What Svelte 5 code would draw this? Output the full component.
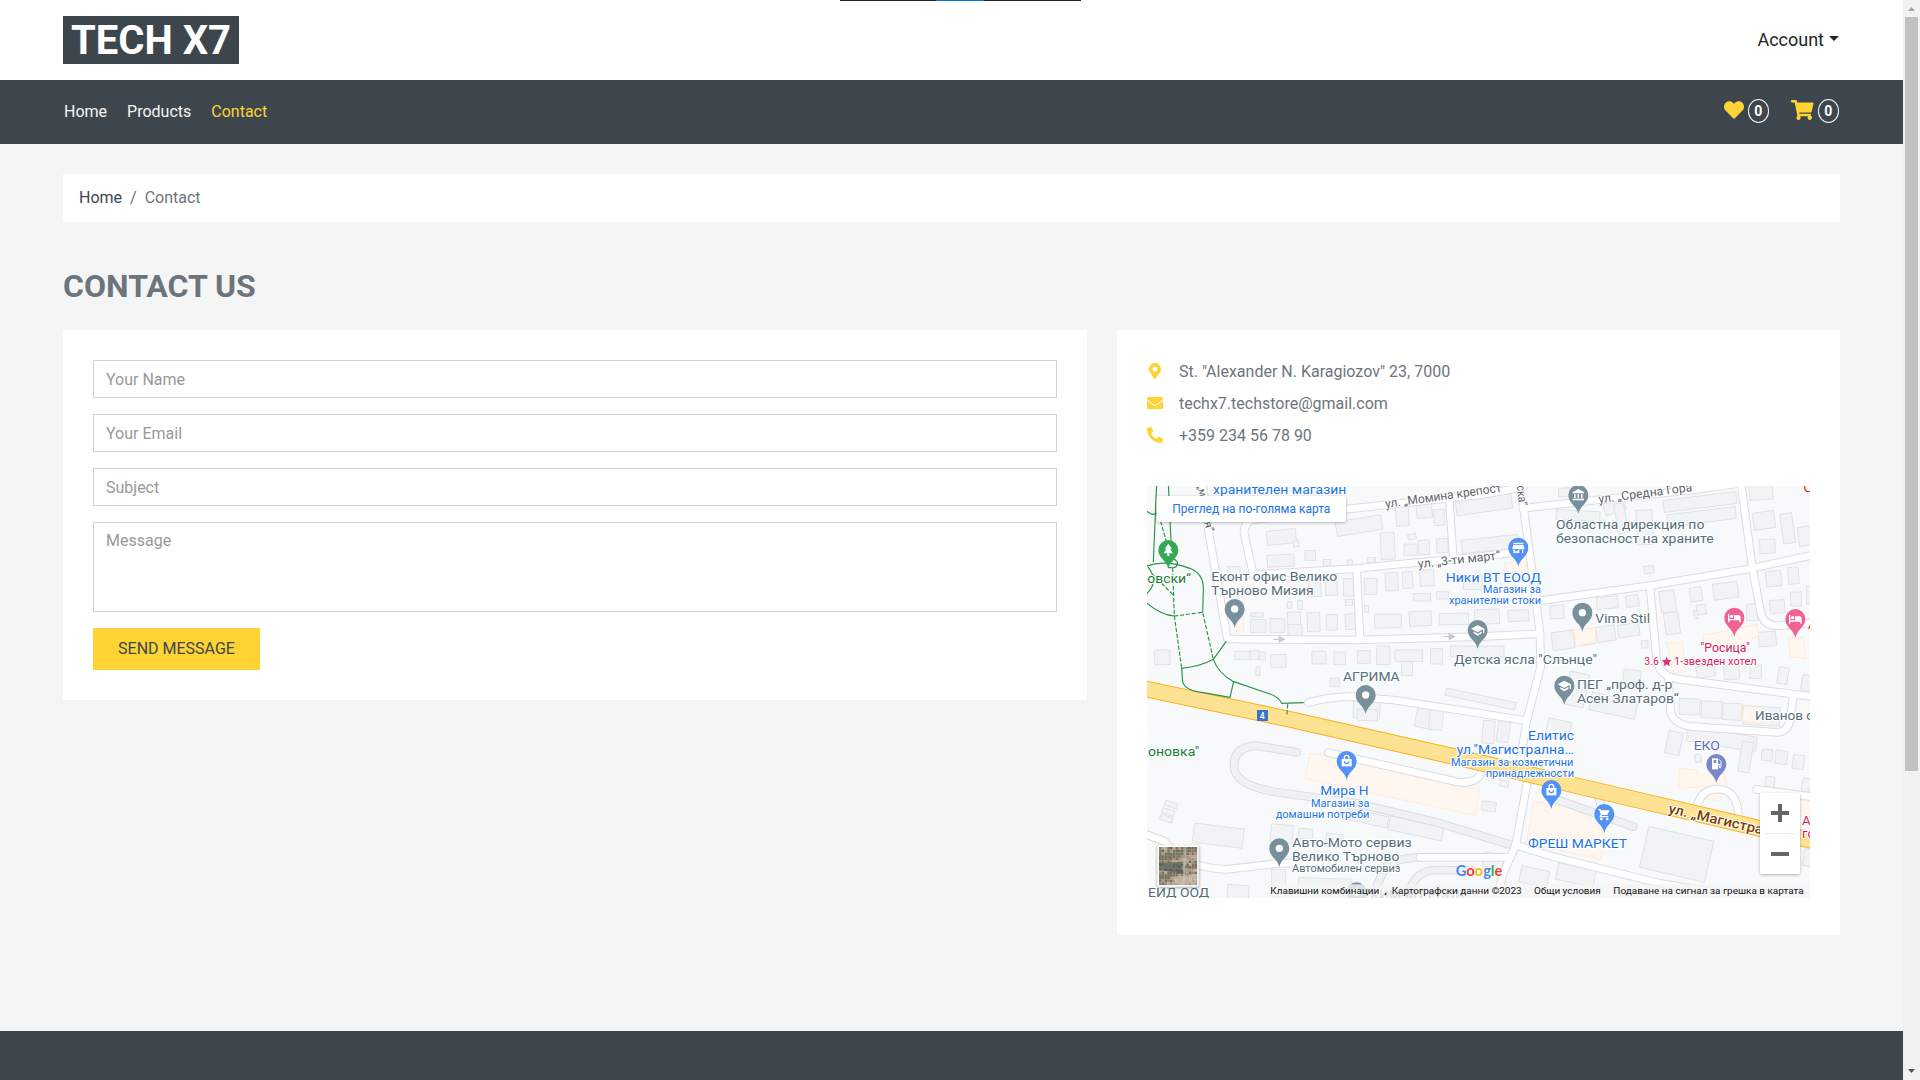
<script>
  const heart = 'M462.3 62.6C407.5 15.9 326 24.3 275.7 76.2L256 96.5l-19.7-20.3C186.1 24.3 104.5 15.9 49.7 62.6c-62.8 53.6-66.1 149.8-9.9 207.9l193.5 199.8c12.5 12.9 32.8 12.9 45.3 0l193.5-199.8c56.3-58.1 53-154.3-9.8-207.9z';
  const cart = 'M528.12 301.319l47.273-208C578.806 78.301 567.391 64 551.99 64H159.208l-9.166-44.81C147.758 8.021 137.93 0 126.529 0H24C10.745 0 0 10.745 0 24v16c0 13.255 10.745 24 24 24h69.883l70.248 343.435C147.325 417.1 136 435.222 136 456c0 30.928 25.072 56 56 56s56-25.072 56-56c0-15.674-6.447-29.835-16.824-40h209.647C430.447 426.165 424 440.326 424 456c0 30.928 25.072 56 56 56s56-25.072 56-56c0-22.172-12.888-41.332-31.579-50.405l5.517-24.276c3.413-15.018-8.002-29.319-23.403-29.319H218.117l-6.545-32h293.145c11.206 0 20.92-7.754 23.403-18.681z';
  const contacts = [
    { text: 'St. "Alexander N. Karagiozov" 23, 7000', box: '-64 0 512 512', icon: 'M172.268 501.67C26.97 291.031 0 269.413 0 192 0 85.961 85.961 0 192 0s192 85.961 192 192c0 77.413-26.97 99.031-172.268 309.67-9.535 13.774-29.93 13.773-39.464 0zM192 272c44.183 0 80-35.817 80-80s-35.817-80-80-80-80 35.817-80 80 35.817 80 80 80z' },
    { text: 'techx7.techstore@gmail.com', box: '0 0 512 512', icon: 'M502.3 190.8c3.9-3.1 9.7-.2 9.7 4.7V400c0 26.5-21.5 48-48 48H48c-26.5 0-48-21.5-48-48V195.6c0-5 5.7-7.8 9.7-4.7 22.4 17.4 52.1 39.5 154.1 113.6 21.1 15.4 56.7 47.8 92.2 47.6 35.7.3 72-32.8 92.3-47.6 102-74.1 131.6-96.3 154-113.7zM256 320c23.2.4 56.6-29.2 73.4-41.4 132.7-96.3 142.8-104.7 173.4-128.7 5.8-4.5 9.2-11.5 9.2-18.9v-19c0-26.5-21.5-48-48-48H48c-26.5 0-48 21.5-48 48v19c0 7.4 3.4 14.3 9.2 18.9 30.6 23.9 40.7 32.4 173.4 128.7 16.8 12.2 50.2 41.8 73.4 41.4z' },
    { text: '+359 234 56 78 90', box: '0 0 512 512', icon: 'M497.39 361.8l-112-48a24 24 0 0 0-28 6.9l-49.6 60.6A370.66 370.66 0 0 1 130.6 204.11l60.6-49.6a23.94 23.94 0 0 0 6.9-28l-48-112A24.16 24.16 0 0 0 122.6.61l-104 24A24 24 0 0 0 0 48c0 256.5 207.9 464 464 464a24 24 0 0 0 23.4-18.6l24-104a24.29 24.29 0 0 0-14.01-27.6z' }
  ];

  // Map geometry: three units per pixel.
  const greyRoads = [
    'M470 817L350 797Q280 800 282 860Q285 915 400 935L650 970L900 1030L1115 1095',
    'M840 1132Q760 1135 735 1165L690 1260',
    'M800 1260Q815 1178 880 1170L1000 1172',
    'M1240 955L1480 1040',
    'M1375 950L1385 985'
  ];
  const roads = [
    'M188 10L205 150L262 477L650 480L1020 470L1200 461',
    'M1165 212L1000 233L750 255L650 266L340 284L312 160Q312 122 345 118L640 85L1020 45L1150 22',
    'M650 268L660 480',
    'M928 60L940 235',
    'M1148 85L1370 60L1660 30L1800 10',
    'M1180 365L1520 318L1820 268L2015 226',
    'M1803 10L1838 270L1863 400Q1873 440 1920 437L2015 428',
    'M1530 320L1550 540Q1558 590 1620 598L2015 650',
    'M1585 600L1592 695Q1600 735 1660 740L1910 757Q1943 757 1950 720L1960 650',
    'M505 668Q570 650 630 650L760 660L1020 700L1160 722',
    'M565 818L950 905Q1010 915 1025 875',
    'M1125 1095L1240 1130L1560 1210L2015 1290',
    'M840 1132L1112 1132',
    'M10 1060L75 1085Q130 1165 260 1168L420 1150L540 1145',
    'M1670 985Q1680 927 1735 927Q1796 932 1795 1015',
    'M1850 928L2015 950',
    'M1135 10L1150 80L1180 300L1200 460L1202 560L1160 722L1140 850L1165 890L1127 1095L1088 1185L1070 1260'
  ];
  const paths = [
    'M50 10L40 245', 'M85 10L96 245', 'M10 88L35 103L96 95',
    'M10 262Q70 235 150 265Q192 282 190 330L188 397',
    'M10 360Q60 405 103 408', 'M10 350Q62 310 25 262',
    'M125 565Q180 560 220 538L258 485',
    'M125 565L128 605Q135 632 190 638L270 652L281 605',
    'M220 538Q235 580 281 605L390 642Q415 650 425 670L490 668',
    'M85 262Q115 268 112 246Q100 230 88 240'
  ];
  const dashed = ['M62 125L85 205', 'M98 265L103 408L125 565', 'M103 408L188 397L220 538', 'M40 285L100 345', 'M443 674L441 702'];

  // [x, y, width, height, angle]
  const buildings = [
    [380,150,88,42,-6],[382,224,80,36,-3],[495,212,32,30,0],[550,238,22,18,0],[622,240,16,20,0],[682,233,24,14,0],[588,115,138,44,-9],[722,158,42,80,-3],[768,78,38,60,-4],[830,72,46,42,-4],[882,88,32,48,-3],[948,52,168,44,-8],[965,172,170,40,-6],[836,180,32,44,-4],[890,176,34,42,-4],[792,192,40,34,0],[460,182,16,18,-8],[804,162,24,16,-8],
    [262,260,38,36,0],[505,300,38,50,-2],[556,304,36,42,-2],[610,296,30,52,0],[673,295,38,48,0],[736,278,38,54,-4],[788,275,30,50,-4],[840,270,42,48,-4],[890,335,36,22,0],[820,341,52,22,0],[674,377,12,20,0],[332,399,38,12,0],[332,419,46,38,0],[390,416,44,42,0],[442,365,14,20,0],[473,362,14,26,0],[442,396,40,38,0],[444,434,42,38,0],[502,398,38,56,-2],[558,404,34,46,0],[616,402,34,46,-3],[616,358,22,18,0],[704,402,80,42,-1],[808,394,66,44,-3],[898,400,88,34,-1],[1004,388,74,44,-2],[1104,390,62,34,-2],[970,285,56,44,0],
    [44,510,46,44,-1],[284,514,50,24,0],[330,512,28,26,0],[358,516,18,24,0],[392,524,46,38,-2],[348,560,12,26,5],[516,514,42,38,-2],[582,516,34,38,0],[652,512,38,38,0],[710,498,40,56,0],[764,510,84,34,0],[784,545,34,42,0],[872,506,36,46,0],[932,498,160,32,0],[570,595,28,24,-2],[640,655,80,60,2],[652,688,60,34,1],[916,646,212,22,12],[828,685,60,60,12],[868,690,40,60,5],[1028,722,35,68,5],[1072,724,36,62,8],
    [1248,92,132,30,3],[1256,24,34,26,-4],[1392,62,64,36,-18],[1428,70,30,90,-10],[1490,90,48,104,-3],[1570,48,220,36,-7],[1582,92,206,36,-7],[1512,258,30,22,-6],[1828,15,70,44,-4],[1840,95,64,52,-8],[1859,178,46,42,-3],[1925,100,36,90,-8],[1975,140,38,58,-8],[1878,273,46,46,-6],[1944,262,32,50,-4],[1890,360,44,40,-4],[1952,336,32,42,0],[2000,318,18,54,0],
    [1230,376,42,40,-3],[1236,454,66,54,-8],[1310,448,54,46,-8],[1370,438,56,46,-8],[1434,432,64,38,-8],[1370,350,64,36,-5],[1458,346,38,34,-8],[1560,332,46,64,-7],[1574,398,44,64,-7],[1650,322,36,42,-8],[1720,308,74,48,-8],[1670,374,28,30,-8],[1662,392,12,24,-5],[1820,372,34,50,0],[1504,482,20,22,0],[1856,455,52,44,-5],[1670,555,54,36,-12],[1752,556,46,42,-4],[1830,555,34,40,0],[1914,562,30,50,8],[1985,585,28,46,10],
    [1450,570,52,46,6],[1280,578,60,100,12],[1350,650,140,54,12],[1220,720,70,56,12],[1618,656,62,48,3],[1684,664,62,50,3],[1748,670,58,50,3],[1810,680,110,56,3],[1580,755,44,68,12],[1640,755,210,44,9],[1800,785,34,92,9],[1665,823,18,24,-6],[1865,808,32,34,5],[1906,812,36,40,8],[1958,825,34,42,8],[1876,890,28,32,5],[1986,895,26,40,8],[1080,902,26,18,8],[1026,965,42,28,8],[74,966,38,16,18],[66,988,38,16,18],[60,1008,38,16,18],
    [160,1038,150,58,7],[392,1034,66,54,5],[476,1046,42,32,5],[558,1062,50,38,5],[600,995,145,34,12],[746,1024,164,42,12],[262,1215,64,60,4],[395,1168,42,82,0],[475,1195,160,50,2],[1140,1165,85,50,12],[1250,1160,115,50,12],[1510,1060,200,126,13],[1990,1110,50,50,10],[1030,1120,60,42,8]
  ];
  const shops = [
    'M290 415L312 412L310 478L290 480Z', 'M1095 250L1170 244L1150 275L1092 275Z',
    'M510 820L590 832L1018 930L1005 1007L495 895Z', 'M1180 965L1290 980L1355 1020L1400 1070L1380 1138L1160 1090Z',
    'M1300 450L1365 443L1368 486L1308 498Z', 'M1690 465L1750 455L1850 432L1858 465L1790 500L1690 490Z',
    'M1580 490L1628 488L1636 575L1598 580Z', 'M1945 470L1990 472L1998 535L1950 530Z',
    'M1620 865L1670 870L1672 885L1750 880L1760 905L1740 965L1700 955L1695 920L1615 925Z',
    'M1812 678L1870 685L1862 730L1806 724Z', 'M1975 960L2015 965L2015 1010L1975 1005Z'
  ];

  const slate = '#78909c', blue = '#5491f5', pink = '#f06292';
  const pins = [
    [85,210,'#34a853','tree'],[284,387,slate,'dot'],[1315,45,slate,'museum'],[1135,203,blue,'store'],[1327,398,slate,'dot'],
    [1783,413,pink,'bed'],[1966,417,pink,'bed'],[1013,450,slate,'school'],[1273,617,slate,'school'],[677,645,slate,'dot'],
    [620,843,blue,'bag'],[418,1105,slate,'dot'],[1234,930,blue,'bag'],[1393,1002,blue,'cart'],[1729,852,'#7986cb','fuel'],[650,1237,slate,'dot']
  ];

  // [text, left, baseline, width, size, kind]
  const labels = [
    ['хранителен магазин',219,42,400,41,'blue'],
    ['Еконт офис Велико',214,303,378,41,'slate'],['Търново Мизия',214,345,307,41,'slate'],
    ['овски“',22,310,131,41,'green'],['оновка"',24,829,154,41,'green'],['АГРИМА',609,602,170,41,'slate'],
    ['Ники ВТ ЕООД',917,306,286,41,'blue'],['Магазин за',1029,338,174,32,'blue'],['хранителни стоки',927,371,276,32,'blue'],
    ['Областна дирекция по',1248,147,445,41,'slate'],['безопасност на храните',1248,189,473,41,'slate'],
    ['Vima Stil',1366,429,164,41,'slate'],['Детска ясла "Слънце"',942,552,429,41,'slate'],
    ['ПЕГ „проф. д-р',1311,627,286,41,'slate'],['Асен Златаров“',1311,669,305,41,'slate'],
    ['"Росица"',1681,515,149,41,'pink'],['3.6',1513,555,44,32,'pink'],['1-звезден хотел',1602,555,248,32,'pink'],
    ['Иванов с',1845,720,175,41,'slate'],['Елитис',1164,780,138,41,'blue'],['ул."Магистрална…',950,822,352,41,'blue'],
    ['Магазин за козметични',933,857,367,32,'blue'],['принадлежности',1037,890,265,32,'blue'],
    ['Мира Н',541,945,145,41,'blue'],['Магазин за',513,980,175,32,'blue'],['домашни потреби',407,1013,281,32,'blue'],
    ['ЕКО',1661,810,79,41,'indigo'],['ФРЕШ МАРКЕТ',1164,1104,297,41,'blue'],
    ['Авто-Мото сервиз',457,1102,358,41,'slate'],['Велико Търново',456,1143,322,41,'slate'],['Автомобилен сервиз',456,1176,325,32,'slate'],
    ['ЕИД ООД',24,1250,184,41,'slate'],['КИМ-МТ ЕООД',690,1256,285,41,'slate'],
    ['А',1986,1035,26,41,'pink'],['го',1986,1075,39,41,'pink'],['С',1990,36,28,41,'red'],['А',2004,447,25,36,'red']
  ];
  // [text, x, baseline, width, size, angle, kind]
  const streets = [
    ['ул. „Момина крепост',737,84,352,37,-8,'street'],['ул. „3-ти март“',835,264,248,37,-6,'street'],
    ['ул. „Средна Гора',1377,70,283,37,-7.5,'street'],['ска“',1130,18,60,36,83,'street'],
    ['„м',172,20,32,32,75,'street'],['я“',193,127,32,32,75,'street'],['ул. „Магистрална',1583,998,366,41,13,'highway']
  ];
  const legal = [['Клавишни комбинации',391,327],[',',733,8],['Картографски данни ©2023',755,390],['Общи условия',1182,200],['Подаване на сигнал за грешка в картата',1420,571]];

  // Small coloured tiles of the satellite preview.
  const hues = ['#8b7c69','#77705f','#a58f78','#5d6355','#b3a08c','#806e58','#8f8b80','#6b7060','#bba890','#7c6c5c'];
  const tiles = Array.from({ length: 196 }, (_, i) => ({
    x: 57 + (i % 14) * 8.15, y: 1101 + Math.floor(i / 14) * 8.15,
    fill: hues[(i * 7 + Math.floor(i / 14) * 3 + ((i * i) % 11)) % 10]
  }));
</script>

<div class="page">
  <div class="view">
    <header class="top">
      <a class="logo" href="#top">TECH X7</a>
      <button class="account">Account<span class="caret"></span></button>
    </header>
    <nav class="bar">
      <div class="links">
        <a href="#home">Home</a>
        <a href="#products">Products</a>
        <a href="#contact" class="active">Contact</a>
      </div>
      <div class="counters">
        <a href="#liked" class="counter"><svg width="20" height="20" viewBox="0 0 512 512"><path d={heart} /></svg><span class="count">0</span></a>
        <a href="#cart" class="counter"><svg width="22.5" height="20" viewBox="0 0 576 512"><path d={cart} /></svg><span class="count">0</span></a>
      </div>
    </nav>
    <main>
      <div class="crumbs"><a href="#home">Home</a><span class="slash">/</span><span>Contact</span></div>
      <h2>CONTACT US</h2>
      <div class="columns">
        <form class="card form">
          <input placeholder="Your Name" />
          <input placeholder="Your Email" />
          <input placeholder="Subject" />
          <textarea placeholder="Message"></textarea>
          <button type="button" class="send">SEND MESSAGE</button>
        </form>
        <section class="card info">
          <ul>
            {#each contacts as c}
              <li><svg width="16" height="16" viewBox={c.box}><path d={c.icon} /></svg>{c.text}</li>
            {/each}
          </ul>
          <svg class="map" width="663" height="412" viewBox="21 18 1989 1236">
            <rect class="land" x="0" y="0" width="2030" height="1280" />
            {#each buildings as [x, y, w, h, a]}
              <rect class="building" {x} {y} width={w} height={h} transform="rotate({a} {x + w / 2} {y + h / 2})" />
            {/each}
            {#each shops as d}<path class="shop" {d} />{/each}
            {#each greyRoads as d}<path class="casing" {d} />{/each}
            {#each greyRoads as d}<path class="minor" {d} />{/each}
            {#each roads as d}<path class="casing" {d} />{/each}
            {#each roads as d}<path class="road" {d} />{/each}
            <path class="hwEdge" d="M0 623L440 716L1000 843L1300 915L2030 1085" />
            <path class="hw" d="M0 623L440 716L1000 843L1300 915L2030 1085" />
            {#each paths as d}<path class="trail" {d} />{/each}
            {#each dashed as d}<path class="trail dash" {d} />{/each}
            <path class="arrow" d="M400 478H420M418 470L433 478L418 486Z" />
            <path class="arrow" d="M910 470H930M928 462L943 470L928 478Z" />
            <rect x="351" y="690" width="33" height="33" fill="#3a76c8" />
            <text class="route" x="367" y="716" text-anchor="middle">4</text>
            {#each streets as [t, x, y, w, s, a, k]}
              <text class={k} {x} {y} font-size={s} textLength={w} lengthAdjust="spacingAndGlyphs" transform="rotate({a} {x} {y})">{t}</text>
            {/each}
            {#each labels as [t, x, y, w, s, k]}
              <text class="label {k}" {x} {y} font-size={s} textLength={w} lengthAdjust="spacingAndGlyphs">{t}</text>
            {/each}
            <path class="star" transform="translate(1580 545)" d="M0-15L4-5L15-4L7 3L9 14L0 8L-9 14L-7 3L-15-4L-4-5Z" />
            {#each pins as [x, y, color, kind]}
              <g transform="translate({x} {y})">
                <path d="M0 57C-4 32-30 26-30 0A30 30 0 1 1 30 0C30 26 4 32 0 57Z" fill={color} />
                {#if kind === 'dot'}<circle r="11" fill="#fff" />
                {:else if kind === 'tree'}<path fill="#fff" d="M0-19L11-3H6L14 10H3V18H-3V10H-14L-6-3H-11Z" />
                {:else if kind === 'museum'}<path fill="#fff" d="M-17-9L0-18L17-9V-5H-17ZM-13-2H-8V9H-13ZM-2.500-2H2.500V9H-2.500ZM8-2H13V9H8ZM-17 11H17V16H-17Z" />
                {:else if kind === 'store'}<path fill="#fff" d="M-15-15H15V-11H-15ZM-15-9H15L18 2V5H-18V2ZM-15 7H3V16H-15ZM11 7H15V16H11Z" /><path fill={color} d="M-10 6H-2V11H-10Z" />
                {:else if kind === 'bed'}<path fill="#fff" d="M-19-12H-15V4H-1V-8H12Q19-8 19 0V14H15V8H-15V14H-19Z" /><circle cx="-8" cy="-4" r="5" fill="#fff" />
                {:else if kind === 'school'}<path fill="#fff" d="M0-15L20-4V10H16V-2L0 7L-20-4ZM-12 4L0 11L12 4V10L0 17L-12 10Z" />
                {:else if kind === 'bag'}<path fill="#fff" d="M-15-6H15V16H-15Z" /><path d="M-7-6V-10A7 7 0 0 1 7-10V-6" fill="none" stroke="#fff" stroke-width="4" /><path d="M-7 1A7 7 0 0 0 7 1" fill="none" stroke={color} stroke-width="4" />
                {:else if kind === 'cart'}<path fill="#fff" d="M-18-15H-11L-9-11H16L9 3H-7L-9 6H12V10H-15L-11 1L-15-11H-18Z" /><circle cx="-9" cy="15" r="4" fill="#fff" /><circle cx="9" cy="15" r="4" fill="#fff" />
                {:else}<path fill="#fff" d="M-13-17H5V16H-13Z" /><path fill={color} d="M-8-12H0V-3H-8Z" /><path fill="none" stroke="#fff" stroke-width="3" d="M5 1H9V10Q13 14 14 9V-8L8-14" />{/if}
              </g>
            {/each}
            <rect class="shade" x="50" y="50" width="568" height="78" rx="6" />
            <rect x="50" y="48" width="568" height="78" rx="6" fill="#fff" />
            <text x="97" y="99" class="bigger" textLength="474" lengthAdjust="spacingAndGlyphs">Преглед на по-голяма карта</text>
            <rect class="shade" x="51" y="1098" width="127" height="126" rx="5" />
            <rect x="52" y="1096" width="124" height="124" rx="5" fill="#fff" />
            {#each tiles as t}<rect x={t.x} y={t.y} width="8.4" height="8.4" fill={t.fill} />{/each}
            <path d="M136 1101L132 1215M57 1160L171 1172" stroke="#c9c4bb" stroke-width="5" opacity=".7" />
            <path d="M57 1150L125 1145L130 1180L57 1170Z" fill="#45544f" opacity=".65" />
            <path d="M95 1190L171 1182V1215H110Z" fill="#cdbfae" opacity=".7" />
            <text class="google" x="947" y="1187" textLength="140" lengthAdjust="spacingAndGlyphs"><tspan fill="#4285f4">G</tspan><tspan fill="#ea4335">o</tspan><tspan fill="#fbbc05">o</tspan><tspan fill="#4285f4">g</tspan><tspan fill="#34a853">l</tspan><tspan fill="#ea4335">e</tspan></text>
            <rect x="388" y="1213" width="1630" height="42" fill="#f5f5f5" opacity=".8" />
            {#each legal as [t, x, w]}<text class="legal" {x} y="1243" textLength={w} lengthAdjust="spacingAndGlyphs">{t}</text>{/each}
            <rect class="shade" x="1860" y="941" width="120" height="244" rx="6" />
            <rect x="1860" y="938" width="120" height="244" rx="6" fill="#fff" />
            <path d="M1893 999H1947M1920 972V1026M1893 1122H1947" stroke="#666" stroke-width="12" />
            <path d="M1875 1061H1965" stroke="#e6e6e6" stroke-width="3" />
          </svg>
        </section>
      </div>
    </main>
    <footer></footer>
    <div class="strip"></div>
  </div>
  <aside class="scroll">
    <svg width="17" height="17"><path d="M5 11h7l-3.500-4z" fill="#a3a3a3" /></svg>
    <div class="thumb"></div>
    <svg class="down" width="17" height="17"><path d="M5 6h7l-3.500 4z" fill="#505050" /></svg>
  </aside>
</div>

<style>
  :global(body) { margin: 0; overflow: hidden; }
  * { box-sizing: border-box; }
  .page { display: flex; width: 1920px; height: 1080px; overflow: hidden; font: 400 16px/24px Roboto, sans-serif; color: #6c757d; background: #f5f5f5; }
  a { text-decoration: none; color: inherit; }
  button { border: 0; background: none; font: inherit; margin: 0; }
  .view { position: relative; width: 1903px; display: flex; flex-direction: column; }
  .strip { position: absolute; top: 0; left: 840px; width: 241px; height: 1px; background: linear-gradient(90deg, #222 96px, #0078d7 96px 144px, #222 144px); }
  .top { height: 80px; background: #fff; display: flex; align-items: center; justify-content: space-between; padding: 0 63px; }
  .logo { width: 176px; height: 48px; padding: 1px 8px 0; background: #3d464d; color: #fff; font-size: 40px; font-weight: 700; line-height: 48px; white-space: nowrap; }
  .account { display: flex; align-items: center; padding: 0 1px 2px 0; color: #212529; font-size: 18px; line-height: 27px; }
  .caret { margin: -1px 0 0 5px; border: 5px solid transparent; border-top-color: #212529; border-bottom: 0; }
  .bar { height: 64px; background: #3d464d; display: flex; align-items: center; justify-content: space-between; padding: 0 64px; }
  .links { display: flex; gap: 20px; color: #f5f5f5; }
  .links .active { color: #ffd333; }
  .counters { display: flex; gap: 22px; margin-top: -2px; }
  .counter { display: flex; align-items: center; gap: 4px; color: #fff; }
  .counter svg { fill: #ffd333; margin-top: -3px; }
  .count { width: 21.500px; height: 24px; border: 1px solid #f5f5f5; border-radius: 50%; text-align: center; font-size: 14px; font-weight: 700; line-height: 22px; }
  main { padding: 30px 63px 0; }
  .crumbs { height: 48px; background: #fff; padding: 12px 16px; display: flex; }
  .crumbs a { color: #3d464d; }
  .slash { margin: 0 8px; }
  h2 { margin: 45px 0 25px; font-size: 32px; line-height: 38px; font-weight: 700; }
  .columns { display: flex; align-items: flex-start; gap: 30px; }
  .card { background: #fff; padding: 30px; }
  .form { width: 1024px; height: 370px; display: flex; flex-direction: column; gap: 16px; align-items: flex-start; }
  .form input, .form textarea { display: block; width: 100%; height: 38px; margin: 0; padding: 6px 12px; border: 1px solid #ced4da; border-radius: 0; font: inherit; resize: none; outline: 0; }
  .form textarea { height: 90px; }
  .form ::placeholder { color: #999; opacity: 1; }
  .send { width: 167px; height: 42px; padding: 0; background: #ffd333; color: #3d464d; }
  .info { width: 723px; height: 605px; }
  ul { list-style: none; margin: 0 0 30px; padding: 0; }
  li { display: flex; align-items: center; gap: 16px; height: 24px; margin-bottom: 8px; }
  li svg { fill: #ffd333; margin-top: -3px; }
  .map { display: block; margin-top: 38px; }
  footer { position: relative; margin-top: 96px; flex: 1; background: #3d464d; }
  .scroll { width: 17px; background: #f1f1f1; display: flex; flex-direction: column; }
  .scroll svg { display: block; flex: none; }
  .thumb { width: 13px; height: 754px; margin-left: 2px; background: #c1c1c1; }
  .down { margin-top: auto; }

  .land { fill: #f8f9fb; }
  .building { fill: #f1f3f4; stroke: #dcdfe3; stroke-width: 2.500; }
  .shop { fill: #fff7ef; stroke: #fce3c0; stroke-width: 2.500; stroke-dasharray: 6 3; }
  .casing, .road, .minor, .hw, .hwEdge, .trail { fill: none; stroke-linejoin: round; stroke-linecap: round; }
  .casing { stroke: #d9dce2; stroke-width: 26; }
  .road { stroke: #fff; stroke-width: 20; }
  .minor { stroke: #eff1f3; stroke-width: 20; }
  .hwEdge { stroke: #f9b21a; stroke-width: 50; }
  .hw { stroke: #fde293; stroke-width: 44; }
  .trail { stroke: #2b9348; stroke-width: 3.500; }
  .dash { stroke-dasharray: 10 8; }
  .arrow { fill: #c5cad3; stroke: #c5cad3; stroke-width: 4; }
  .map text { font-family: Roboto, sans-serif; }
  .label, .street, .highway { paint-order: stroke; stroke: #fff; stroke-width: 6; stroke-linejoin: round; }
  .blue { fill: #1a73e8; }
  .slate { fill: #546e7a; }
  .green { fill: #188038; }
  .pink { fill: #d81b60; }
  .red { fill: #d93025; }
  .indigo { fill: #5c6bc0; }
  .street { fill: #5f6368; }
  .highway { fill: #7a3e00; font-weight: 500; }
  .star { fill: #e0306f; }
  .route { fill: #fff; font-size: 26px; font-weight: 500; }
  .bigger { fill: #1a73e8; font-size: 37px; }
  .map .google { font-family: Lato, sans-serif; font-size: 46px; font-weight: 700; paint-order: stroke; stroke: #fff; stroke-width: 3; }
  .legal { fill: #111; font-size: 29px; }
  .shade { fill: #000; opacity: .3; filter: blur(4px); }
</style>
